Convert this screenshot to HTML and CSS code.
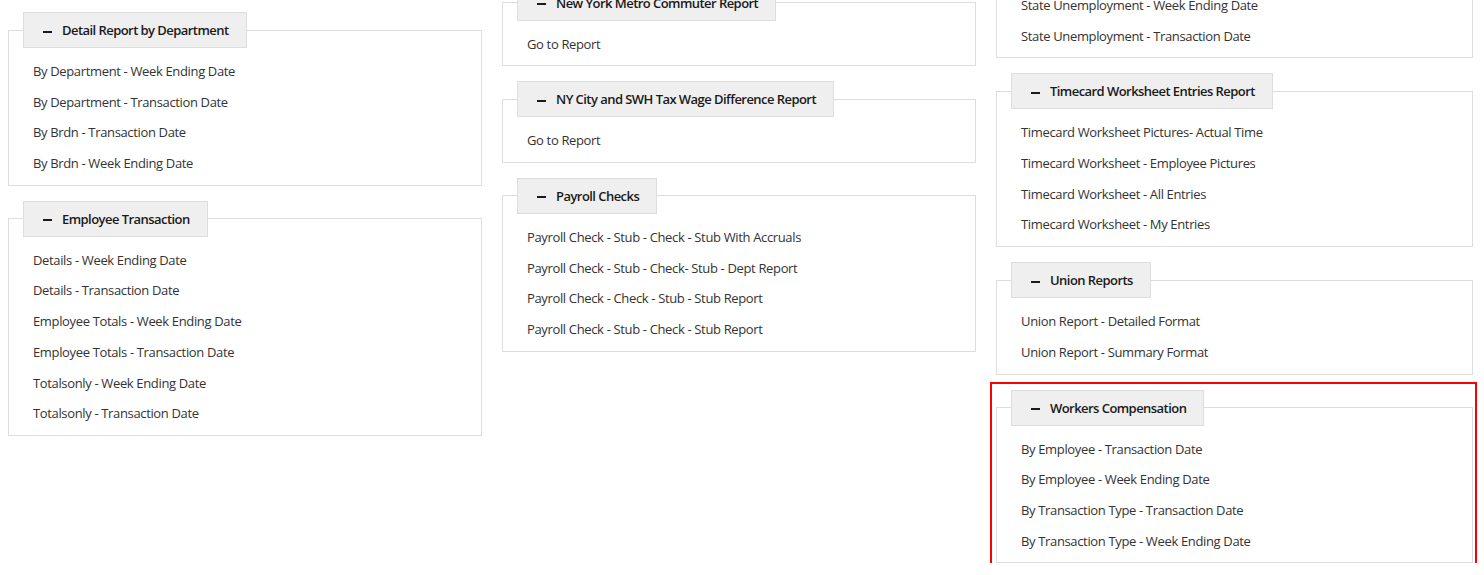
FILE: index.html
```html
<!DOCTYPE html>
<html lang="en">
<head>
  <meta charset="UTF-8" />
  <meta name="viewport" content="width=device-width, initial-scale=1.0" />
  <title>Reports</title>
  <link rel="stylesheet" href="styles.css">
</head>
<body>

<div class="report--grid">

  <!-- Column 1 -->
  <div class="report--column report--column-first">
    <fieldset class="report--group">
      <legend class="report--title"><span class="report--toggle"></span>Detail Report by Department</legend>
      <ul class="report--list">
        <li><a href="#">By Department - Week Ending Date</a></li>
        <li><a href="#">By Department - Transaction Date</a></li>
        <li><a href="#">By Brdn - Transaction Date</a></li>
        <li><a href="#">By Brdn - Week Ending Date</a></li>
      </ul>
    </fieldset>

    <fieldset class="report--group">
      <legend class="report--title"><span class="report--toggle"></span>Employee Transaction</legend>
      <ul class="report--list">
        <li><a href="#">Details - Week Ending Date</a></li>
        <li><a href="#">Details - Transaction Date</a></li>
        <li><a href="#">Employee Totals - Week Ending Date</a></li>
        <li><a href="#">Employee Totals - Transaction Date</a></li>
        <li><a href="#">Totalsonly - Week Ending Date</a></li>
        <li><a href="#">Totalsonly - Transaction Date</a></li>
      </ul>
    </fieldset>
  </div>

  <!-- Column 2 -->
  <div class="report--column report--column-second">
    <fieldset class="report--group">
      <legend class="report--title"><span class="report--toggle"></span>New York Metro Commuter Report</legend>
      <ul class="report--list">
        <li><a href="#">Go to Report</a></li>
      </ul>
    </fieldset>

    <fieldset class="report--group">
      <legend class="report--title"><span class="report--toggle"></span>NY City and SWH Tax Wage Difference Report</legend>
      <ul class="report--list">
        <li><a href="#">Go to Report</a></li>
      </ul>
    </fieldset>

    <fieldset class="report--group">
      <legend class="report--title"><span class="report--toggle"></span>Payroll Checks</legend>
      <ul class="report--list">
        <li><a href="#">Payroll Check - Stub - Check - Stub With Accruals</a></li>
        <li><a href="#">Payroll Check - Stub - Check- Stub - Dept Report</a></li>
        <li><a href="#">Payroll Check - Check - Stub - Stub Report</a></li>
        <li><a href="#">Payroll Check - Stub - Check - Stub Report</a></li>
      </ul>
    </fieldset>
  </div>

  <!-- Column 3 -->
  <div class="report--column report--column-third">
    <fieldset class="report--group">
      <legend class="report--title"><span class="report--toggle"></span>State Unemployment</legend>
      <ul class="report--list">
        <li><a href="#">State Unemployment - Week Ending Date</a></li>
        <li><a href="#">State Unemployment - Transaction Date</a></li>
      </ul>
    </fieldset>

    <fieldset class="report--group">
      <legend class="report--title"><span class="report--toggle"></span>Timecard Worksheet Entries Report</legend>
      <ul class="report--list">
        <li><a href="#">Timecard Worksheet Pictures- Actual Time</a></li>
        <li><a href="#">Timecard Worksheet - Employee Pictures</a></li>
        <li><a href="#">Timecard Worksheet - All Entries</a></li>
        <li><a href="#">Timecard Worksheet - My Entries</a></li>
      </ul>
    </fieldset>

    <fieldset class="report--group">
      <legend class="report--title"><span class="report--toggle"></span>Union Reports</legend>
      <ul class="report--list">
        <li><a href="#">Union Report - Detailed Format</a></li>
        <li><a href="#">Union Report - Summary Format</a></li>
      </ul>
    </fieldset>

    <div class="report--highlight">
      <fieldset class="report--group">
        <legend class="report--title"><span class="report--toggle"></span>Workers Compensation</legend>
        <ul class="report--list">
          <li><a href="#">By Employee - Transaction Date</a></li>
          <li><a href="#">By Employee - Week Ending Date</a></li>
          <li><a href="#">By Transaction Type - Transaction Date</a></li>
          <li><a href="#">By Transaction Type - Week Ending Date</a></li>
        </ul>
      </fieldset>
    </div>
  </div>

</div>

</body>
</html>
```

FILE: styles.css
```css
body {
  margin: 0;
  font-family: "Open Sans", "Noto Sans", sans-serif;
  font-size: 13px;
  letter-spacing: -0.35px;
  color: #333333;
  background-color: #ffffff;
  overflow: hidden;
}

.report--grid {
  display: grid;
  grid-template-columns: 474px 474px 477px;
  column-gap: 20px;
  padding-left: 8px;
  align-items: start;
}

.report--column {
  display: flex;
  flex-direction: column;
  gap: 15px;
}

.report--column-first {
  margin-top: 12px;
}

.report--column-second {
  margin-top: -15.5px;
}

.report--column-third {
  margin-top: -54px;
}

.report--group {
  margin: 0;
  padding: 0;
  min-width: 0;
  border: 1px solid #dddddd;
}

.report--title {
  margin-left: 14px;
  padding: 0 17px 0 19px;
  height: 36px;
  box-sizing: border-box;
  line-height: 34px;
  font-weight: 600;
  letter-spacing: -0.55px;
  color: #1a1a1a;
  background-color: #efefef;
  border: 1px solid #dddddd;
}

.report--toggle {
  display: inline-block;
  width: 9px;
  height: 2px;
  margin-right: 10px;
  vertical-align: middle;
  background-color: #1a1a1a;
}

.report--list {
  list-style: none;
  margin: 0;
  padding: 8px 24px 6px;
}

.report--list li {
  height: 30.7px;
  line-height: 30.7px;
}

.report--list a {
  color: #333333;
  text-decoration: none;
}

.report--list a:hover {
  text-decoration: underline;
}

.report--highlight {
  position: relative;
}

.report--highlight::after {
  content: "";
  position: absolute;
  top: -8px;
  left: -6px;
  right: -4px;
  bottom: -7px;
  border: 2px solid #ff0000;
  pointer-events: none;
}
```
